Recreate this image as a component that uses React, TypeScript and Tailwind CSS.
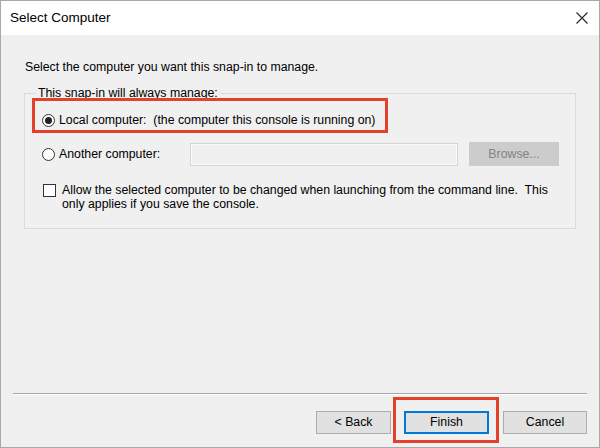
import React from "react";

const font = { fontFamily: '"Liberation Sans", Arial, sans-serif' };

function Radio({ checked }: { checked?: boolean }) {
  return (
    <span className="w-[13px] h-[13px] rounded-full border border-[#333] bg-white flex items-center justify-center shrink-0">
      {checked && <span className="w-[7px] h-[7px] rounded-full bg-[#222]" />}
    </span>
  );
}

function Button({ label, width, focused }: { label: string; width: string; focused?: boolean }) {
  return (
    <button
      className={`${width} h-[23px] flex items-center justify-center text-[12.3px] text-black bg-[#e1e1e1] ${
        focused ? "border-2 border-[#0078d7]" : "border border-[#adadad]"
      }`}
    >
      {label}
    </button>
  );
}

export default function App() {
  return (
    <div
      style={font}
      className="w-[600px] h-[448px] border border-[#a8a8a8] bg-[#f0f0f0] flex flex-col text-black overflow-hidden"
    >
      {/* Title bar */}
      <div className="h-[34px] bg-white flex items-center justify-between pl-[9px] pr-[11px] shrink-0">
        <span className="text-[13.5px]">Select Computer</span>
        <svg width="12" height="12" viewBox="0 0 12 12" className="text-[#222]">
          <path d="M0.5 0.5 L11.5 11.5 M11.5 0.5 L0.5 11.5" stroke="currentColor" strokeWidth="1.1" />
        </svg>
      </div>

      {/* Body */}
      <div className="flex-1 flex flex-col text-[12.3px]">
        <p className="pt-[24px] pl-[24px] leading-4">Select the computer you want this snap-in to manage.</p>

        <fieldset className="mt-[10px] mx-[23px] border border-[#dcdcdc] pb-[17px]">
          <legend className="ml-[11px] px-[2px] leading-4">This snap-in will always manage:</legend>

          {/* Local computer */}
          <div className="relative mt-[9px] h-[20px] pl-[17px] flex items-center gap-[4px]">
            <Radio checked />
            <span className="whitespace-pre">Local computer:  (the computer this console is running on)</span>
            <div className="absolute left-[7px] top-[-12px] w-[356px] h-[35px] border-[3px] border-[#e2412c] pointer-events-none" />
          </div>

          {/* Another computer */}
          <div className="mt-[12px] h-[24px] pl-[17px] flex items-center">
            <Radio />
            <span className="ml-[4px] w-[131px]">Another computer:</span>
            <div className="w-[268px] h-[23px] border border-[#d4d4d4] bg-[#f0f0f0] shadow-[inset_0_0_0_1px_#fafafa]" />
            <div className="ml-[11px] w-[90px] h-[24px] bg-[#cccccc] text-[#838383] flex items-center justify-center">
              Browse...
            </div>
          </div>

          {/* Allow checkbox */}
          <div className="mt-[17px] pl-[18px] flex items-start gap-[6px]">
            <span className="mt-[1px] w-[13px] h-[13px] border border-[#333] bg-white shrink-0" />
            <span className="leading-[14px]">
              Allow the selected computer to be changed when launching from the command line.&nbsp; This
              <br />
              only applies if you save the console.
            </span>
          </div>
        </fieldset>

        {/* Footer */}
        <div className="mt-auto pb-[13px]">
          <div className="mx-[12px] h-[2px] border-t border-[#a6a6a6] border-b border-b-white" />
          <div className="mt-[16px] pr-[12px] flex justify-end">
            <Button label="< Back" width="w-[75px]" />
            <div className="relative ml-[13px]">
              <Button label="Finish" width="w-[85px]" focused />
              <div className="absolute left-[-11px] top-[-14px] w-[106px] h-[46px] border-[3px] border-[#e2412c] pointer-events-none" />
            </div>
            <div className="ml-[14px]">
              <Button label="Cancel" width="w-[84px]" />
            </div>
          </div>
        </div>
      </div>
    </div>
  );
}
